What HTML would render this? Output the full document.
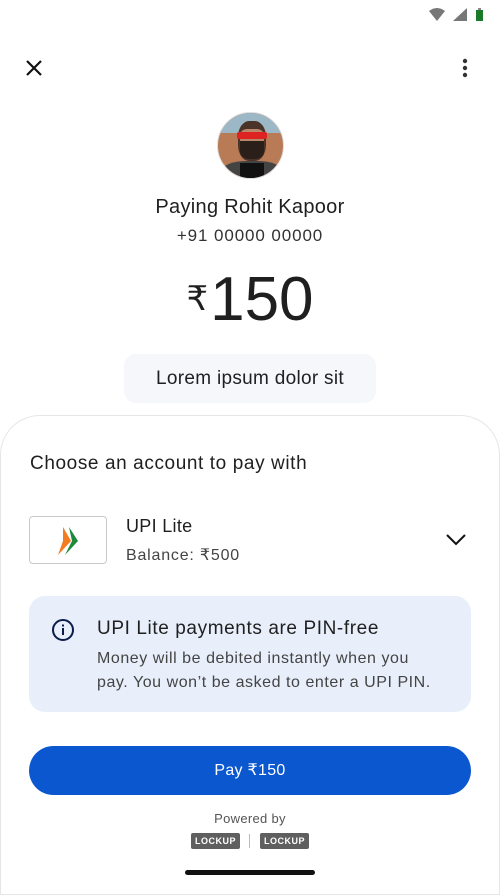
<!DOCTYPE html>
<html><head><meta charset="utf-8"><style>
*{margin:0;padding:0;box-sizing:border-box}
body{width:500px;height:888px;background:#fff;font-family:"Liberation Sans",sans-serif;color:#1f1f1f;position:relative;overflow:hidden}
.a{position:absolute}
.c{left:0;width:500px;text-align:center}
</style></head><body>
<svg class="a" style="left:427px;top:7px" width="60" height="16">
<path d="M2 4 Q10 -2 18 4 L10 14 Z" fill="#777"/>
<path d="M26 14 L40 14 L40 1 Z" fill="#777"/>
<rect x="49" y="3" width="7" height="11" fill="#1a7a2a"/><rect x="51" y="1" width="3" height="2" fill="#888"/>
</svg>
<svg class="a" style="left:25px;top:59px" width="18" height="18"><path d="M2 2 L16 16 M16 2 L2 16" stroke="#111" stroke-width="2.2"/></svg>
<svg class="a" style="left:461px;top:58px" width="8" height="20"><circle cx="4" cy="3" r="2.2" fill="#333"/><circle cx="4" cy="10" r="2.2" fill="#333"/><circle cx="4" cy="17" r="2.2" fill="#333"/></svg>
<div class="a" style="left:217px;top:112px;width:67px;height:67px;border-radius:50%;overflow:hidden;background:#b87b55;border:1px solid #ddd">
<div class="a" style="left:0;top:0;width:67px;height:20px;background:#9cb7c6"></div>
<div class="a" style="left:20px;top:8px;width:28px;height:40px;border-radius:40%;background:#4a3328"></div>
<div class="a" style="left:22px;top:16px;width:24px;height:20px;border-radius:30%;background:#b9876a"></div>
<div class="a" style="left:19px;top:19px;width:30px;height:7px;background:#d22;border-radius:2px"></div>
<div class="a" style="left:22px;top:28px;width:24px;height:18px;border-radius:0 0 40% 40%;background:#2b1f1a"></div>
<div class="a" style="left:4px;top:48px;width:60px;height:25px;border-radius:40% 40% 0 0;background:#444"></div>
<div class="a" style="left:22px;top:50px;width:24px;height:20px;background:#111"></div>
</div>
<div class="a c" style="top:196px;font-size:20px;letter-spacing:.3px">Paying Rohit Kapoor</div>
<div class="a c" style="top:226px;font-size:17px;letter-spacing:.9px;color:#333">+91 00000 00000</div>
<div class="a c" style="top:264px;font-size:62px;line-height:70px;color:#1f1f1f"><span style="font-size:34px;vertical-align:10px;margin-right:2px">₹</span>150</div>
<div class="a" style="left:124px;top:354px;width:252px;height:49px;background:#f5f7fb;border-radius:12px;text-align:center;line-height:49px;font-size:19px;letter-spacing:.3px">Lorem ipsum dolor sit</div>
<div class="a" style="left:0;top:415px;width:500px;height:480px;border:1px solid #e6e6e6;border-radius:40px 40px 0 0;background:#fff"></div>
<div class="a" style="left:30px;top:453px;font-size:19px;letter-spacing:.6px">Choose an account to pay with</div>
<div class="a" style="left:29px;top:516px;width:78px;height:48px;border:1px solid #c8c8c8;border-radius:4px">
<svg class="a" style="left:24px;top:6px" width="30" height="36"><path d="M9 4 L17 18 L4 32 L9 18 Z" fill="#f47b20"/><path d="M15 4 L24 18 L11 32 L18 18 Z" fill="#1c8a3a"/></svg></div>
<div class="a" style="left:126px;top:516px;font-size:18px;letter-spacing:.3px">UPI Lite</div>
<div class="a" style="left:126px;top:545px;font-size:16px;letter-spacing:.8px;color:#444">Balance: ₹500</div>
<svg class="a" style="left:445px;top:532px" width="22" height="14"><path d="M2 3 L11 12 L20 3" stroke="#111" stroke-width="2" fill="none"/></svg>
<div class="a" style="left:29px;top:596px;width:442px;height:116px;background:#e8effb;border-radius:16px"></div>
<svg class="a" style="left:51px;top:618px" width="24" height="24"><circle cx="12" cy="12" r="10" stroke="#0b1d4a" stroke-width="2" fill="none"/><rect x="11" y="10" width="2" height="7" fill="#0b1d4a"/><rect x="11" y="6.5" width="2" height="2" fill="#0b1d4a"/></svg>
<div class="a" style="left:97px;top:618px;font-size:19px;letter-spacing:.6px">UPI Lite payments are PIN-free</div>
<div class="a" style="left:97px;top:647px;font-size:16px;line-height:24px;letter-spacing:.55px;color:#444">Money will be debited instantly when you<br>pay. You won’t be asked to enter a UPI PIN.</div>
<div class="a" style="left:29px;top:746px;width:442px;height:49px;background:#0b57d0;border-radius:25px;color:#fff;text-align:center;line-height:49px;font-size:16px;letter-spacing:.3px">Pay ₹150</div>
<div class="a c" style="top:811px;font-size:13px;letter-spacing:.3px;color:#555">Powered by</div>
<div class="a" style="left:191px;top:833px;width:49px;height:16px;background:#5f5f5f;border-radius:2px;color:#fff;font-size:9px;font-weight:bold;text-align:center;line-height:16px;letter-spacing:.5px">LOCKUP</div>
<div class="a" style="left:249px;top:834px;width:1px;height:14px;background:#bbb"></div>
<div class="a" style="left:260px;top:833px;width:49px;height:16px;background:#5f5f5f;border-radius:2px;color:#fff;font-size:9px;font-weight:bold;text-align:center;line-height:16px;letter-spacing:.5px">LOCKUP</div>
<div class="a" style="left:185px;top:870px;width:130px;height:5px;background:#111;border-radius:3px"></div>
</body></html>
